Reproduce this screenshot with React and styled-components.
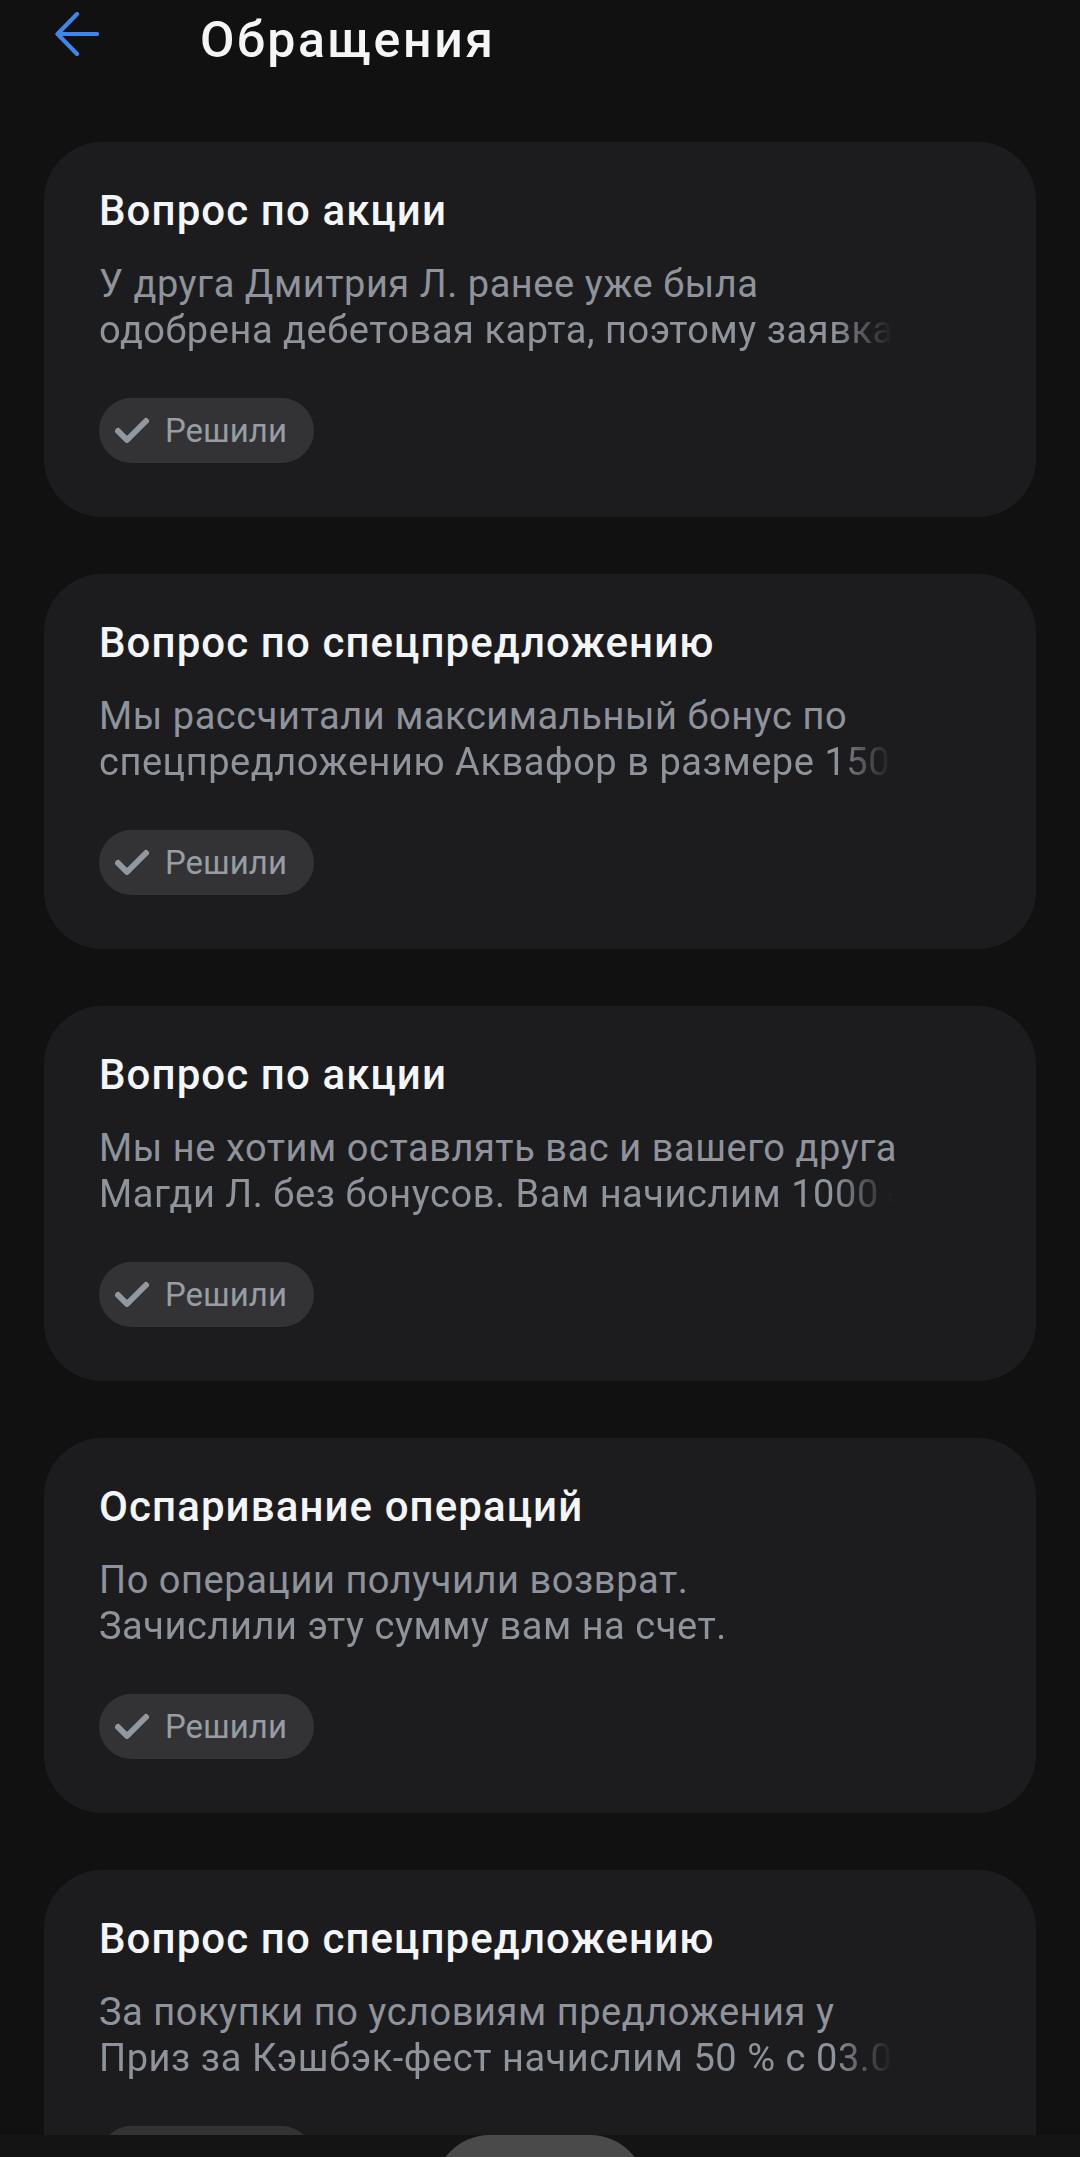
import React from "react";
import styled, { createGlobalStyle } from "styled-components";

const GlobalStyle = createGlobalStyle`
  html, body {
    margin: 0;
    padding: 0;
    background: #111111;
  }
  body {
    font-family: Roboto, "Noto Sans", "Liberation Sans", sans-serif;
    -webkit-font-smoothing: antialiased;
  }
`;

const Page = styled.div`
  display: flex;
  flex-direction: column;
  width: 1080px;
  height: 2157px;
  background: #111111;
  overflow: hidden;
`;

const Header = styled.header`
  display: flex;
  align-items: flex-start;
  gap: 101px;
  padding: 0 55px;
  flex-shrink: 0;
`;

const BackButton = styled.button`
  display: flex;
  width: 44px;
  height: 44px;
  margin-top: 12px;
  padding: 0;
  border: none;
  background: none;
  cursor: pointer;
`;

const Title = styled.h1`
  margin: 12px 0 0;
  font-size: 50px;
  line-height: 56px;
  font-weight: 500;
  letter-spacing: 2.6px;
  color: #f4f5f7;
`;

const List = styled.main`
  flex: 1;
  display: flex;
  flex-direction: column;
  gap: 57px;
  padding: 74px 44px 0;
  overflow: hidden;
`;

const Card = styled.section`
  flex-shrink: 0;
  display: flex;
  flex-direction: column;
  align-items: flex-start;
  padding: 45px 55px 54px;
  border-radius: 58px;
  background: #1c1c1e;
`;

const CardTitle = styled.h2`
  margin: 0;
  font-size: 42px;
  line-height: 48px;
  font-weight: 500;
  letter-spacing: 1.1px;
  color: #f4f5f7;
`;

const Preview = styled.div`
  width: 794px;
  margin-top: 26px;
  font-size: 38px;
  line-height: 46px;
  letter-spacing: 0.55px;
  color: #8f939b;
`;

const PreviewLine = styled.div`
  white-space: nowrap;
  ${(p) =>
    p.$fade &&
    `
    overflow: hidden;
    -webkit-mask-image: linear-gradient(to right, #000 calc(100% - 58px), transparent 100%);
    mask-image: linear-gradient(to right, #000 calc(100% - 58px), transparent 100%);
  `}
`;

const StatusChip = styled.div`
  display: flex;
  align-items: center;
  gap: 14px;
  height: 65px;
  margin-top: 45px;
  padding: 0 27px 0 14px;
  border-radius: 33px;
  background: #333335;
  color: #989ca3;
  font-size: 33px;
`;

const BottomBar = styled.div`
  display: flex;
  justify-content: center;
  height: 22px;
  flex-shrink: 0;
  background: #141414;
  overflow: hidden;
`;

const FabPeek = styled.div`
  width: 212px;
  height: 112px;
  flex-shrink: 0;
  border-radius: 56px;
  background: #4a4a4b;
`;

const ArrowIcon = () => (
  <svg width="44" height="44" viewBox="0 0 44 44" fill="none">
    <path
      d="M42 22H3M22 2L2.5 22L22 42"
      stroke="#3f85ec"
      strokeWidth="4.2"
      strokeLinecap="round"
      strokeLinejoin="round"
    />
  </svg>
);

const CheckIcon = () => (
  <svg width="38" height="30" viewBox="0 0 38 30" fill="none">
    <path
      d="M5 15L14 24L33 5"
      stroke="#93979e"
      strokeWidth="6"
      strokeLinecap="round"
      strokeLinejoin="round"
    />
  </svg>
);

const tickets = [
  {
    title: "Вопрос по акции",
    lines: [
      "У друга Дмитрия Л. ранее уже была",
      "одобрена дебетовая карта, поэтому заявка не засчитывается",
    ],
  },
  {
    title: "Вопрос по спецпредложению",
    lines: [
      "Мы рассчитали максимальный бонус по",
      "спецпредложению Аквафор в размере 1500 ₽ и начислим его",
    ],
  },
  {
    title: "Вопрос по акции",
    lines: [
      "Мы не хотим оставлять вас и вашего друга",
      "Магди Л. без бонусов. Вам начислим 1000 ₽ в течение месяца",
    ],
  },
  {
    title: "Оспаривание операций",
    lines: ["По операции получили возврат.", "Зачислили эту сумму вам на счет."],
  },
  {
    title: "Вопрос по спецпредложению",
    lines: [
      "За покупки по условиям предложения у",
      "Приз за Кэшбэк-фест начислим 50 % с 03.03 по 31.03",
    ],
  },
];

function TicketCard({ title, lines }) {
  return (
    <Card>
      <CardTitle>{title}</CardTitle>
      <Preview>
        <PreviewLine>{lines[0]}</PreviewLine>
        <PreviewLine $fade>{lines[1]}</PreviewLine>
      </Preview>
      <StatusChip>
        <CheckIcon />
        <span>Решили</span>
      </StatusChip>
    </Card>
  );
}

export default function App() {
  return (
    <Page>
      <GlobalStyle />
      <Header>
        <BackButton aria-label="Назад">
          <ArrowIcon />
        </BackButton>
        <Title>Обращения</Title>
      </Header>
      <List>
        {tickets.map((t, i) => (
          <TicketCard key={i} {...t} />
        ))}
      </List>
      <BottomBar>
        <FabPeek />
      </BottomBar>
    </Page>
  );
}
